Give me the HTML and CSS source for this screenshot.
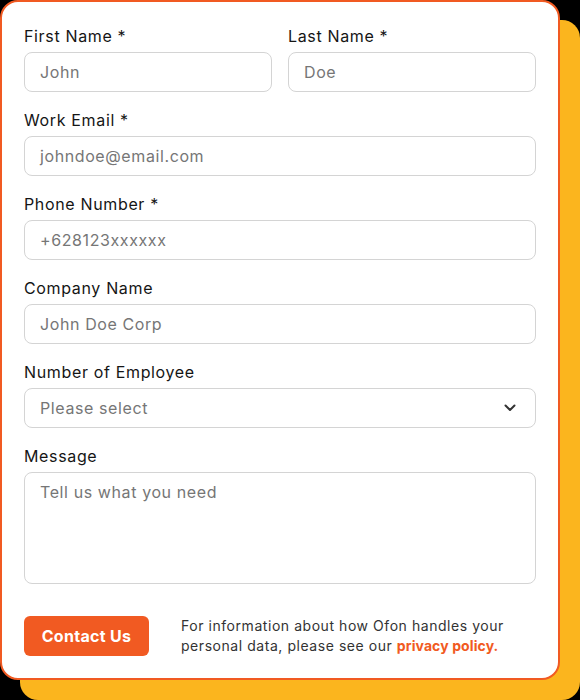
FILE: index.html
```html
<!DOCTYPE html>
<html lang="en">
<head>
<meta charset="utf-8">
<title>Contact form</title>
<link rel="stylesheet" href="styles.css">
</head>
<body>
<form class="card">
  <div class="row">
    <div class="field">
      <label class="label">First Name *</label>
      <div class="input">John</div>
    </div>
    <div class="field">
      <label class="label">Last Name *</label>
      <div class="input">Doe</div>
    </div>
  </div>
  <div class="field">
    <label class="label">Work Email *</label>
    <div class="input">johndoe@email.com</div>
  </div>
  <div class="field">
    <label class="label">Phone Number *</label>
    <div class="input">+628123xxxxxx</div>
  </div>
  <div class="field">
    <label class="label">Company Name</label>
    <div class="input">John Doe Corp</div>
  </div>
  <div class="field">
    <label class="label">Number of Employee</label>
    <div class="input select">
      <span>Please select</span>
      <svg class="chev" width="12" height="8" viewBox="0 0 12 8"><path d="M1.5 1.5 L6 6 L10.5 1.5" fill="none" stroke="#333" stroke-width="2" stroke-linecap="round" stroke-linejoin="round"/></svg>
    </div>
  </div>
  <div class="field">
    <label class="label">Message</label>
    <div class="input textarea">Tell us what you need</div>
  </div>
  <div class="footer">
    <div class="btn">Contact Us</div>
    <p class="note">For information about how Ofon handles your<br>personal data, please see our <span class="link">privacy policy.</span></p>
  </div>
</form>
</body>
</html>
```
FILE: styles.css
```css
* { box-sizing: border-box; }
html, body { margin: 0; padding: 0; background: #000; }
body {
  width: 580px;
  height: 700px;
  font-family: Inter, "Open Sans", sans-serif;
  color: #222;
}
.card {
  width: 560px;
  height: 680px;
  background: #fff;
  border: 2px solid #F15A22;
  border-radius: 18px;
  box-shadow: 20px 20px 0 0 #FBB51E;
  padding: 24px 22px 22px;
  display: flex;
  flex-direction: column;
  gap: 18px;
}
.row {
  display: flex;
  gap: 16px;
}
.row .field { flex: 1; }
.field {
  display: flex;
  flex-direction: column;
  gap: 6px;
}
.label {
  font-size: 16px;
  line-height: 20px;
  font-weight: 400;
  letter-spacing: 0.65px;
  color: #151515;
}
.input {
  height: 40px;
  border: 1px solid #d4d4d4;
  border-radius: 8px;
  padding: 0 15px;
  display: flex;
  align-items: center;
  font-size: 16px;
  letter-spacing: 0.6px;
  color: #767676;
}
.select { justify-content: space-between; padding-right: 19px; }
.textarea {
  height: 112px;
  align-items: flex-start;
  padding-top: 9px;
}
.footer {
  margin-top: 14px;
  display: flex;
  align-items: center;
  gap: 32px;
}
.btn {
  width: 125px;
  height: 40px;
  background: #F15A22;
  color: #fff;
  border-radius: 6px;
  font-weight: 700;
  font-size: 16px;
  letter-spacing: 0.3px;
  display: flex;
  align-items: center;
  justify-content: center;
}
.note {
  margin: 0;
  font-size: 14px;
  line-height: 20px;
  letter-spacing: 0.55px;
  color: #333;
  white-space: nowrap;
}
.link { color: #F15A22; font-weight: 700; letter-spacing: 0.1px; }
```
